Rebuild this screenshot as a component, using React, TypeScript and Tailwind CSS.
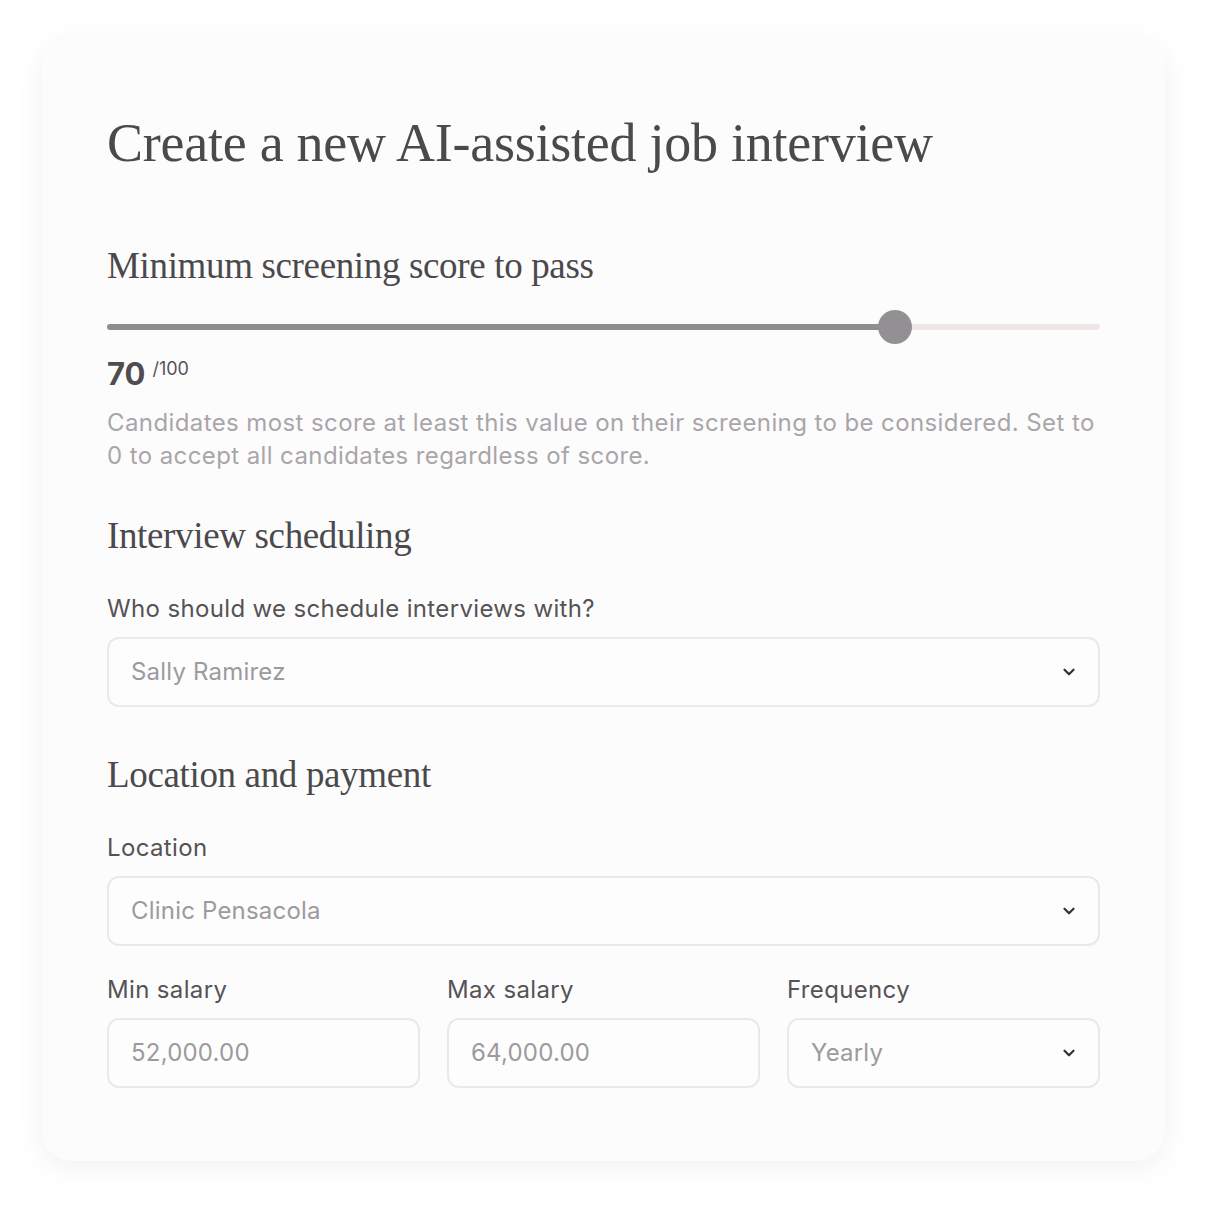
import { ChevronDown } from "lucide-react"

const serif = { fontFamily: '"Liberation Serif", "DejaVu Serif", serif' }

function SelectBox({ value }: { value: string }) {
  return (
    <div className="flex h-[70px] items-center justify-between rounded-[12px] border-2 border-[#eee7e6] bg-[#fefdfe] pl-[22px] pr-[20px]">
      <span className="text-[24px] tracking-[0.2px] text-[#9d9a9d]">{value}</span>
      <ChevronDown className="h-[18px] w-[18px] text-[#333]" strokeWidth={3} />
    </div>
  )
}

function Field({ label, children }: { label: string; children: React.ReactNode }) {
  return (
    <div className="flex flex-col gap-[13px]">
      <label className="text-[24px] leading-[30px] tracking-[0.35px] text-[#555355]">{label}</label>
      {children}
    </div>
  )
}

function TextBox({ value }: { value: string }) {
  return (
    <div className="flex h-[70px] items-center rounded-[12px] border-2 border-[#eee7e6] bg-[#fefdfe] pl-[22px]">
      <span className="text-[24px] tracking-[0.2px] text-[#9d9a9d]">{value}</span>
    </div>
  )
}

export default function App() {
  const score = 70
  return (
    <div className="min-h-[1207px] w-full bg-white p-[38px_42px]" style={{ fontFamily: "Inter, 'Noto Sans', sans-serif" }}>
      <div className="w-[1123px] rounded-[30px] bg-[#fdfcfd] px-[65px] pb-[73px] pt-[75px] shadow-[0_6px_30px_rgba(0,0,0,0.06)]">
        <h1 className="text-[54px] leading-[60px] tracking-[-0.25px] text-[#4b494b]" style={serif}>
          Create a new AI-assisted job interview
        </h1>

        <h2 className="mt-[71px] text-[37px] leading-[44px] tracking-[-0.35px] text-[#4b494b]" style={serif}>
          Minimum screening score to pass
        </h2>

        <div className="relative mt-[22px] h-[34px]">
          <div className="absolute left-0 right-0 top-[14px] h-[6px] rounded-full bg-[#eee7e5]" />
          <div className="absolute left-0 top-[14px] h-[6px] rounded-full bg-[#8f8d8f]" style={{ width: `${(788 / 993) * 100}%` }} />
          <div className="absolute top-0 h-[34px] w-[34px] rounded-full bg-[#929092]" style={{ left: 771 }} />
        </div>

        <div className="mt-[10px] flex items-start gap-[7px]">
          <span className="text-[31px] font-bold leading-[40px] text-[#4f4d4f]">{score}</span>
          <span className="mt-[5px] text-[18px] leading-[20px] text-[#555355]">/100</span>
        </div>

        <p className="mt-[12px] text-[24px] leading-[33px] tracking-[0.4px] text-[#a9a6a9]">
          Candidates most score at least this value on their screening to be considered. Set to 0 to accept all candidates regardless of score.
        </p>

        <h2 className="mt-[42px] text-[37px] leading-[44px] tracking-[-0.35px] text-[#4b494b]" style={serif}>
          Interview scheduling
        </h2>
        <div className="mt-[36px]">
          <Field label="Who should we schedule interviews with?">
            <SelectBox value="Sally Ramirez" />
          </Field>
        </div>

        <h2 className="mt-[46px] text-[37px] leading-[44px] tracking-[-0.35px] text-[#4b494b]" style={serif}>
          Location and payment
        </h2>
        <div className="mt-[36px]">
          <Field label="Location">
            <SelectBox value="Clinic Pensacola" />
          </Field>
        </div>

        <div className="mt-[29px] grid grid-cols-3 gap-[27px]">
          <Field label="Min salary">
            <TextBox value="52,000.00" />
          </Field>
          <Field label="Max salary">
            <TextBox value="64,000.00" />
          </Field>
          <Field label="Frequency">
            <SelectBox value="Yearly" />
          </Field>
        </div>
      </div>
    </div>
  )
}
